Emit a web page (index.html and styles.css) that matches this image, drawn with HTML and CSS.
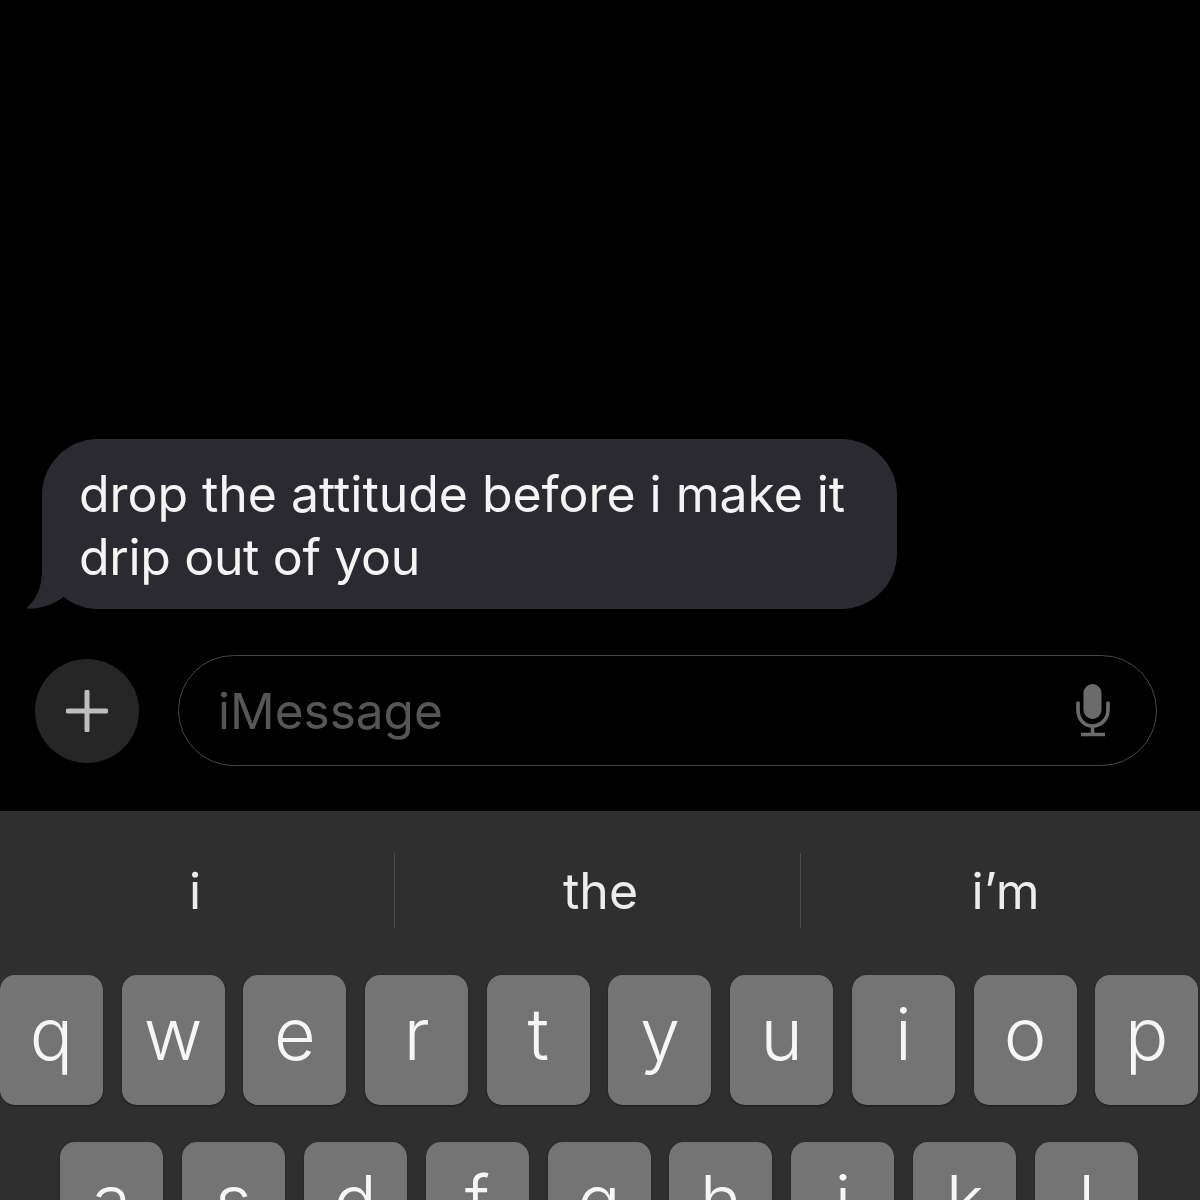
FILE: index.html
```html
<!DOCTYPE html>
<html>
    <head>
        <meta charset="utf-8">
        <title>iMessage</title>
        <link rel="stylesheet" href="styles.css">
    </head>
    <body>
        <div class="thread">
            <div class="bubble">
                <svg class="tail" width="60" height="56" viewBox="0 0 60 56">
                    <path d="M16 0 L16 16 C16 34 11 46 0 55.5 C13 56.5 27 52 38 43.5 L60 20 L60 0 Z"/>
                </svg>
                <span class="line">drop the attitude before i make it</span><br>
                <span class="line line-short">drip out of you</span>
            </div>
        </div>

        <div class="composer">
            <div class="plus">
                <svg width="42" height="42" viewBox="0 0 42 42">
                    <path d="M21 2 V40 M2 21 H40" stroke="#bdbdbd" stroke-width="5" stroke-linecap="round"/>
                </svg>
            </div>
            <div class="field">
                <span class="placeholder">iMessage</span>
                <svg class="mic" width="34" height="53" viewBox="0 0 34 53">
                    <rect x="7.5" y="0" width="18" height="35" rx="9" fill="#6b6b6b"/>
                    <path d="M2 19 V26 C2 35 8 42 16.5 42 C25 42 32 35 32 26 V19" fill="none" stroke="#6b6b6b" stroke-width="3.6" stroke-linecap="round"/>
                    <path d="M16.5 42 V50 M5 50.5 H29" fill="none" stroke="#6b6b6b" stroke-width="3.6"/>
                </svg>
            </div>
        </div>

        <div class="keyboard">
            <div class="suggestions">
                <div class="word word-left">i</div>
                <div class="divider"></div>
                <div class="word word-mid">the</div>
                <div class="divider"></div>
                <div class="word word-right">i’m</div>
            </div>
            <div class="row">
                <div class="key">q</div>
                <div class="key">w</div>
                <div class="key">e</div>
                <div class="key">r</div>
                <div class="key">t</div>
                <div class="key">y</div>
                <div class="key">u</div>
                <div class="key">i</div>
                <div class="key">o</div>
                <div class="key">p</div>
            </div>
            <div class="row row-2">
                <div class="key">a</div>
                <div class="key">s</div>
                <div class="key">d</div>
                <div class="key">f</div>
                <div class="key">g</div>
                <div class="key">h</div>
                <div class="key">j</div>
                <div class="key">k</div>
                <div class="key">l</div>
            </div>
        </div>
    </body>
</html>
```

FILE: styles.css
```css
html, body {
    margin: 0;
    height: 1200px;
    overflow: hidden;
    background: #000;
    font-family: Inter, "Liberation Sans", sans-serif;
}

.thread {
    padding: 439px 0 0 42px;
}

.bubble {
    position: relative;
    box-sizing: border-box;
    width: 855px;
    height: 170px;
    padding: 24px 0 0 37px;
    border-radius: 56px;
    background: #2a2a30;
    color: #f4f4f4;
    font-size: 50px;
    letter-spacing: -0.05px;
    line-height: 63px;
}

.line {
    position: relative;
}

.line-short {
    letter-spacing: -0.35px;
}

.tail {
    position: absolute;
    left: -16px;
    bottom: 0;
    fill: #2a2a30;
}

.composer {
    display: flex;
    align-items: center;
    gap: 39px;
    height: 111px;
    margin-top: 46px;
    padding-left: 35px;
}

.plus {
    display: flex;
    align-items: center;
    justify-content: center;
    width: 104px;
    height: 104px;
    border-radius: 50%;
    background: #262626;
}

.field {
    display: flex;
    align-items: center;
    justify-content: space-between;
    box-sizing: border-box;
    width: 979px;
    height: 111px;
    padding: 0 46px 0 39px;
    border: 1.5px solid #474747;
    border-radius: 56px;
}

.placeholder {
    color: #565656;
    font-size: 49.5px;
}

.keyboard {
    height: 389px;
    margin-top: 45px;
    background: #2f2f2f;
    overflow: hidden;
}

.suggestions {
    display: flex;
    align-items: center;
    height: 159px;
    padding-bottom: 5px;
}

.word {
    color: #ececec;
    font-size: 50px;
    text-align: center;
}

.word-left {
    width: 390px;
    padding-right: 4px;
}

.word-mid {
    width: 399px;
    padding-left: 6px;
}

.word-right {
    width: 389px;
    padding-left: 10px;
}

.divider {
    width: 1px;
    height: 75px;
    background: #4c4c4c;
}

.row {
    display: flex;
    gap: 18.7px;
    margin-bottom: 37px;
}

.row-2 {
    gap: 18.9px;
    padding-left: 60px;
}

.key {
    flex: none;
    width: 103px;
    height: 130px;
    padding-top: 14px;
    box-sizing: border-box;
    border-radius: 15px;
    background: #747474;
    box-shadow: 0 1px 2px #1c1c1c;
    color: #f6f6f6;
    font-size: 72px;
    font-weight: 300;
    line-height: 90px;
    text-align: center;
}
```
